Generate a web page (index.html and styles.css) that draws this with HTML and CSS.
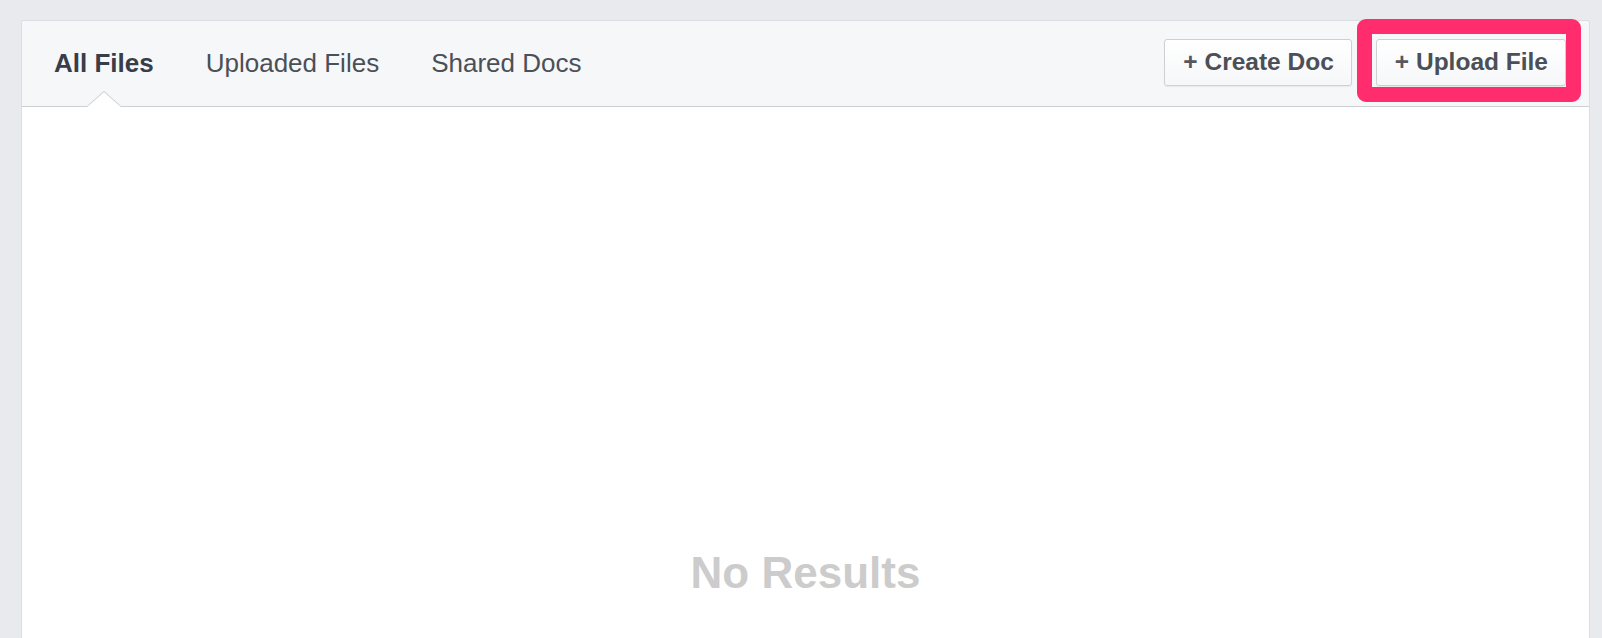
FILE: index.html
```html
<!DOCTYPE html>
<html lang="en">
<head>
    <meta charset="UTF-8">
    <meta name="viewport" content="width=device-width, initial-scale=1.0">
    <title>Files</title>
    <link rel="stylesheet" href="styles.css">
</head>
<body>
    <div class="card">
        <div class="card-header">
            <nav class="tabs">
                <a class="tab active" href="#">All Files</a>
                <a class="tab" href="#">Uploaded Files</a>
                <a class="tab" href="#">Shared Docs</a>
            </nav>
            <div class="actions">
                <button class="btn"><span class="plus">+</span> Create Doc</button>
                <div class="highlight-wrap">
                    <button class="btn"><span class="plus">+</span> Upload File</button>
                    <span class="highlight"></span>
                </div>
            </div>
        </div>
        <div class="card-body">
            <p class="empty">No Results</p>
        </div>
    </div>
</body>
</html>
```

FILE: styles.css
```css
html {
    overflow: hidden;
}
body {
    margin: 0;
    padding: 20px 12px 0 21px;
    background: #e9eaed;
    font-family: 'Liberation Sans', Arial, sans-serif;
    color: #4b4f56;
}
.card {
    background: #fff;
    border: 1px solid #dadde1;
    border-bottom: none;
    border-radius: 3px 3px 0 0;
    min-height: 700px;
}
.card-header {
    display: flex;
    justify-content: space-between;
    align-items: stretch;
    height: 85px;
    background: #f6f7f9;
    border-bottom: 1px solid #ccd0d5;
    border-radius: 3px 3px 0 0;
}
.tabs {
    display: flex;
    gap: 52px;
    padding-left: 32px;
}
.tab {
    position: relative;
    display: flex;
    align-items: center;
    font-size: 26px;
    color: #4b4f56;
    text-decoration: none;
}
.tab.active {
    font-weight: bold;
    color: #383d49;
}
.tab.active::before,
.tab.active::after {
    content: "";
    position: absolute;
    left: 50%;
    transform: translateX(-50%);
    width: 0;
    height: 0;
    border-style: solid;
    border-color: transparent;
}
.tab.active::before {
    bottom: -1px;
    border-width: 0 18px 16px 18px;
    border-bottom-color: #c4c7cc;
}
.tab.active::after {
    bottom: -1px;
    border-width: 0 17px 15px 17px;
    border-bottom-color: #fff;
}
.actions {
    display: flex;
    align-items: center;
    gap: 24px;
    padding-right: 23px;
    padding-bottom: 3px;
}
.btn {
    height: 47px;
    padding: 0 17px 0 18px;
    border: 1px solid #ced0d4;
    border-radius: 3px;
    background: linear-gradient(#ffffff, #f6f7f9);
    box-shadow: 0 1px 1px rgba(0, 0, 0, 0.06);
    font-family: inherit;
    font-size: 24.5px;
    font-weight: bold;
    color: #4b4f56;
    cursor: pointer;
}
.plus {
    color: #55585e;
}
.highlight-wrap {
    position: relative;
}
.highlight {
    position: absolute;
    left: -19px;
    top: -20px;
    width: 224px;
    height: 83px;
    box-sizing: border-box;
    border: 15px solid #ff2d6d;
    border-radius: 9px;
    pointer-events: none;
}
.card-body {
    padding-top: 444px;
}
.empty {
    margin: 0;
    text-align: center;
    font-size: 44px;
    line-height: 44px;
    font-weight: bold;
    color: #cccccc;
}
```
